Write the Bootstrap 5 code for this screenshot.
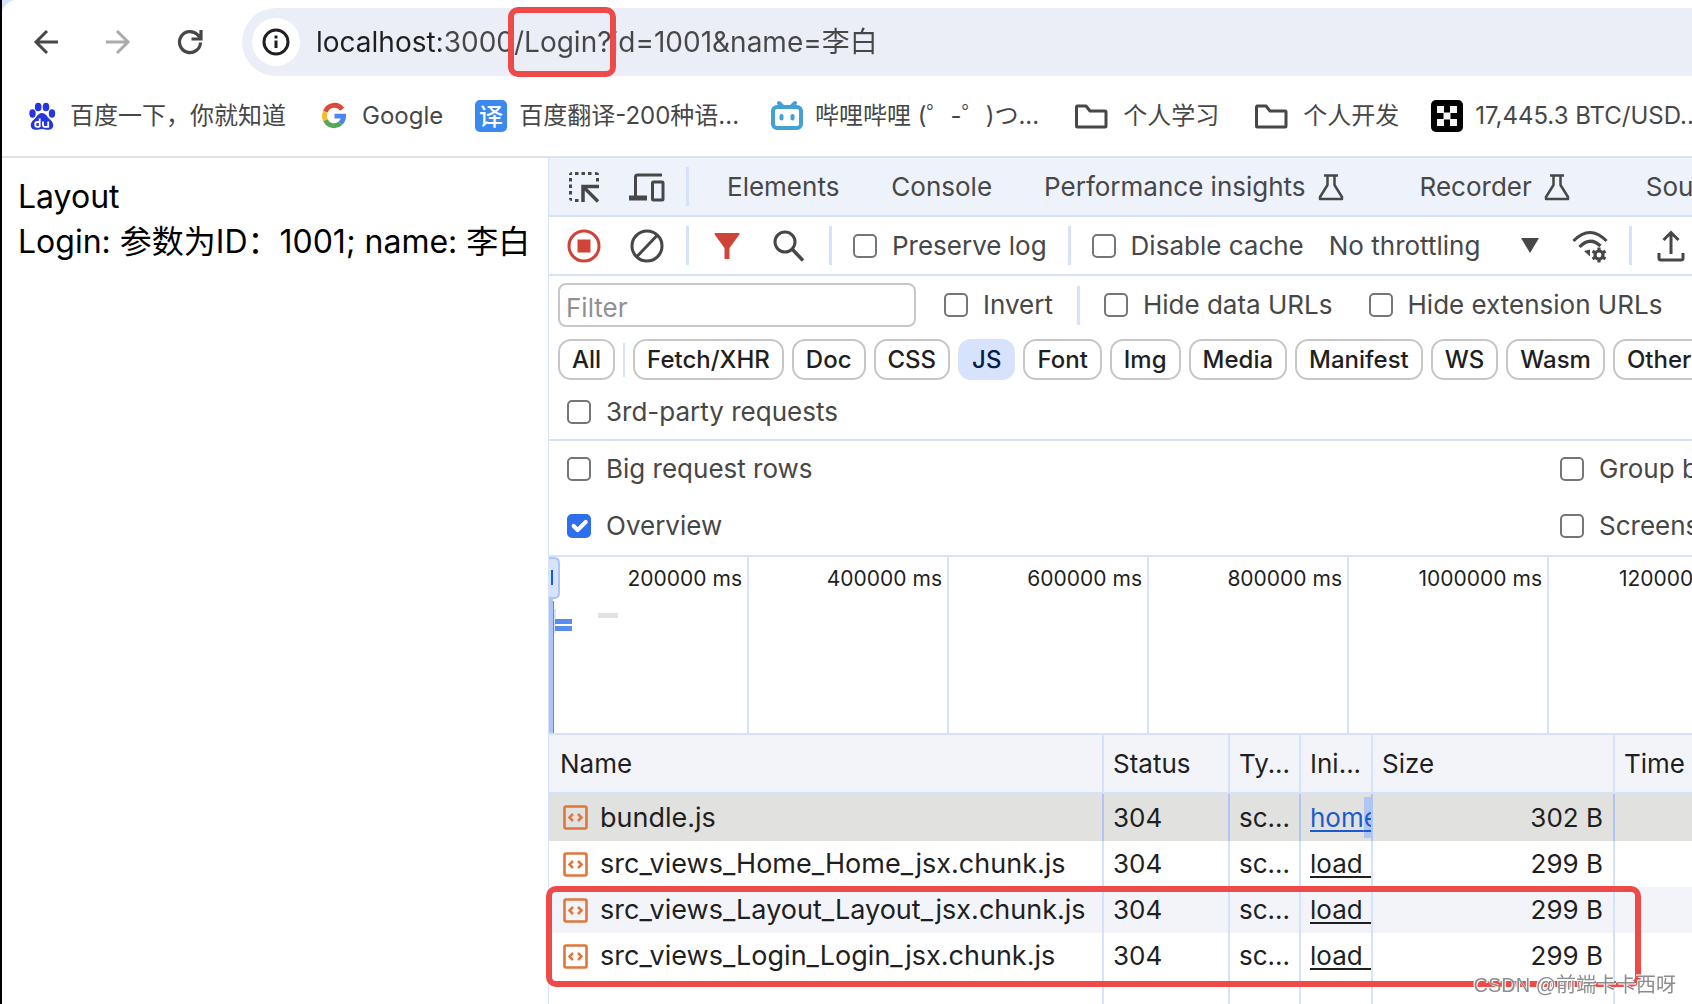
<!DOCTYPE html>
<html lang="zh-CN">
<head>
<meta charset="utf-8">
<meta name="viewport" content="width=device-width, initial-scale=1">
<title>localhost:3000/Login</title>
<link href="https://cdn.jsdelivr.net/npm/bootstrap@5.3.0/dist/css/bootstrap.min.css" rel="stylesheet">
<style>
:root{--line:#d6e2fb;--ink:#1f1f1f;--soft:#474747;--mark:#ed4a4a}
body{font-family:Inter,"Noto Sans CJK SC",sans-serif;font-size:26px;line-height:32px;color:var(--soft);background:#fff;border-left:2px solid #000;overflow:hidden}
svg{display:block;flex:none}
.plain-btn{border:0;background:none;padding:0;color:inherit;display:block;flex:none}
/* browser chrome */
.chrome-top{border-bottom:2px solid #e1e3e1;background:radial-gradient(circle at 16px 16px,#fff 16px,#d3e3fd 17px) 0 0/16px 16px no-repeat;height:158px}
.nav-row{padding:8px 0 0 28px}
.nav-btns{gap:40px;margin-right:36px}
.omnibox{height:68px;border-radius:34px 0 0 34px;background:#ebeef7;padding-left:10px}
.site-info{width:48px;height:48px;border-radius:50%;background:#fff;color:var(--ink)}
.address{border:0;outline:0;padding:0 0 4px;margin-left:16px;font-size:28px;height:48px;color:transparent;background:linear-gradient(to right,var(--ink) 124px,var(--soft) 124px);-webkit-background-clip:text;background-clip:text}
.frame-mark{position:absolute;border:6px solid var(--mark);border-radius:10px;pointer-events:none}
.url-mark{left:266px;top:-1px;width:108px;height:70px}
.bookmarks{gap:32px;padding:20px 0 0 24px;font-size:24px;white-space:nowrap}
.bookmarks a{color:var(--soft);text-decoration:none;display:flex;align-items:center;gap:12px;flex:none;height:40px}
.bm-icon{width:32px;height:32px}
.bm-folder{width:40px;height:32px}
/* page */
.page-pane{flex:0 0 546px;padding:16px;font-size:32px;line-height:45px;color:#000;white-space:nowrap}
/* devtools */
.devtools{border-left:1px solid var(--line);min-width:0}
.bar{height:59px;border-bottom:2px solid var(--line);white-space:nowrap;padding-left:18px}
.bar .sep{margin:0 21px}
.tabs-bar{background:#edf2fb}
.tabs-bar .sep{margin-right:12px}
.tool-gap{gap:28px}
.sep{width:3px;height:39px;background:var(--line);flex:none}
.tabs-bar .nav-link{color:var(--soft);padding:0 26px;display:flex;gap:12px;align-items:center;border:0}
.tabs-bar .nav-link.experiment{padding-right:50px}
.form-check-input.tick{width:24px;height:24px;margin:0;border:2px solid #767676;border-radius:5px;flex:none;float:none}
.form-check-input.tick:checked{background-color:#2f6fed;border-color:#2f6fed;background-size:27px}
.tick-label{display:flex;align-items:center;gap:15px;white-space:nowrap;flex:none}
.throttle{position:relative;width:210px;margin:0 33px 0 25px}
.throttle select{appearance:none;border:0;background:none;color:inherit;width:100%;padding:0}
.throttle svg{position:absolute;right:0;top:8px;pointer-events:none}
.filters{padding:7px 0 11px 9px;border-bottom:2px solid var(--line)}
.filter-box{width:358px;height:44px;border:2px solid #c7c7c7;border-radius:8px;padding:4px 6px 0;color:var(--ink);flex:none}
.filter-box::placeholder{color:#919191}
.ext-tick{margin-left:36px}
.chips{gap:8px;padding-top:12px}
.chip{border:2px solid #c7c7c7;border-radius:13px;height:41px;padding:0 12px;font-size:24px;line-height:37px;font-weight:500;color:var(--ink);background:#fff;flex:none}
.chip.on{background:#d7e3fc;border-color:#d7e3fc;color:#041e49}
.chips .sep{width:2px;height:34px}
.third{padding:16px 0 0 9px}
.settings{height:116px;border-bottom:2px solid var(--line);padding:12px 0 0 18px}
.settings .tick-label{height:32px}
.settings-col{display:flex;flex-direction:column;gap:25px}
.settings-col.first{flex:0 0 993px}
/* overview */
.overview{position:relative;height:178px;border-bottom:2px solid var(--line);color:var(--ink);font-size:21px;line-height:26px}
.tickcol{flex:0 0 200px;border-right:2px solid var(--line);text-align:right;padding:9px 5px 0 0;white-space:nowrap}
.overview svg{position:absolute;left:0;top:0}
/* requests */
.requests{table-layout:fixed;width:100%;height:100%;border-collapse:separate;border-spacing:0;color:var(--ink)}
.requests th,.requests td{border-right:2px solid var(--line);padding:0 10px 0 9px;white-space:nowrap;overflow:hidden;height:46px;vertical-align:middle}
.requests th:first-child{padding-left:11px}
.requests th:last-child,.requests td:last-child{border-right:0}
.requests th{font-weight:400;height:59px;background:#f2f4fa;border-bottom:2px solid var(--line)}
.requests .picked td{height:47px;background:#e1e1df;border-right-color:#aec6f6}
.requests .stripe td{background:#f2f4fa}
.requests .rest td{height:auto}
.requests td.init{padding-right:0}
.init a{color:inherit;text-decoration:underline 2px;text-underline-offset:3px;text-decoration-skip-ink:none}
.picked .init a{color:#1a5bd2}
.hit{background:#aec6f6;padding:5px 0}
.file{display:flex;align-items:center;gap:12px;padding-left:5px;font-size:27px}
.rows-mark{left:-3px;top:151px;right:51px;height:101px;z-index:2}
.watermark{position:fixed;right:16px;bottom:6px;font-family:"Liberation Sans","Noto Sans CJK SC",sans-serif;font-size:20px;line-height:26px;color:#8d8d8d;text-shadow:1px 1px 0 #fff,-1px -1px 0 #fff;z-index:3}
</style>
</head>
<body class="vh-100 d-flex flex-column">
<svg width="0" height="0" class="position-absolute" aria-hidden="true">
  <symbol id="flask" viewBox="0 0 26 28"><path d="M6 2.500h14M9.500 3v9L2 24v2h22v-2L16.500 12V3" fill="none" stroke="currentColor" stroke-width="2.500" stroke-linejoin="round"/></symbol>
  <symbol id="folder" viewBox="0 0 40 32"><path d="M6 6h9l4 5h15a1 1 0 0 1 1 1v14a1 1 0 0 1-1 1H6.500a1 1 0 0 1-1-1V7z" fill="none" stroke="#474747" stroke-width="3" stroke-linejoin="round"/></symbol>
  <symbol id="script" viewBox="0 0 25 25"><rect x="1.500" y="1.500" width="22" height="22" rx="1.500" fill="none" stroke="#e0763c" stroke-width="2.600"/><path d="M10 9l-3.500 3.500L10 16M15 9l3.500 3.500L15 16" fill="none" stroke="#e0763c" stroke-width="2.500"/></symbol>
</svg>

<header class="chrome-top flex-shrink-0">
  <div class="nav-row d-flex align-items-center">
    <div class="nav-btns d-flex">
      <button class="plain-btn" aria-label="Back"><svg width="32" height="32" viewBox="0 0 32 32" fill="none" stroke="#474747" stroke-width="3"><path d="M28 16H6M17 5L6 16l11 11"/></svg></button>
      <button class="plain-btn" aria-label="Forward"><svg width="32" height="32" viewBox="0 0 32 32" fill="none" stroke="#ababab" stroke-width="3"><path d="M4 16h22M15 5l11 11-11 11"/></svg></button>
      <button class="plain-btn" aria-label="Reload"><svg width="32" height="32" viewBox="0 0 32 32" fill="none" stroke="#474747" stroke-width="3.200"><path d="M26.500 16.500A10.500 10.500 0 1 1 23.500 8.700L26 11.500M27 4v9h-9.500"/></svg></button>
    </div>
    <div class="omnibox d-flex align-items-center flex-fill position-relative">
      <button class="plain-btn site-info d-flex align-items-center justify-content-center" aria-label="Site information"><svg width="28" height="28" viewBox="0 0 28 28"><circle cx="14" cy="14" r="12" fill="none" stroke="currentColor" stroke-width="3"/><path d="M12.500 12.500h3V20h-3zM12.500 7.500h3v3h-3z" fill="currentColor"/></svg></button>
      <input class="address flex-fill" type="text" aria-label="Address" value="localhost:3000/Login?id=1001&amp;name=李白">
      <div class="frame-mark url-mark"></div>
    </div>
  </div>
  <nav class="bookmarks d-flex overflow-hidden">
    <a href="#"><svg class="bm-icon" viewBox="0 0 32 32"><g fill="#2536dd"><ellipse cx="6.500" cy="13.500" rx="3.200" ry="4.200"/><ellipse cx="12.200" cy="7" rx="3.300" ry="4.300"/><ellipse cx="20" cy="7" rx="3.300" ry="4.300"/><ellipse cx="26" cy="13.500" rx="3.200" ry="4.200"/><path d="M16 13c4 0 5 4 8 6.500 5 4 4 10-1.500 10.300-2.500.1-4-.8-6.500-.8s-4 .9-6.500.8C4 29.500 3 23.500 8 19.500 11 17 12 13 16 13z"/></g><path d="M13.700 18.500v8.500M13.500 22h-2.300q-2 0-2 2.400t2 2.400h2.500M17 21.500v3.700q0 1.600 1.500 1.600h3.700v-5.300" stroke="#fff" stroke-width="1.800" fill="none"/></svg>百度一下，你就知道</a>
    <a href="#"><svg class="bm-icon" viewBox="0 0 32 32" fill="none" stroke-width="4.800"><path d="M24.200 9.200A9.600 9.600 0 0 0 7.400 11.800" stroke="#dc4a3c"/><path d="M7.400 11.800a9.600 9.600 0 0 0 0 8.400" stroke="#f6bb2f"/><path d="M7.400 20.200a9.600 9.600 0 0 0 14.900 3.200" stroke="#55a655"/><path d="M22.300 23.400A9.600 9.600 0 0 0 25.600 16.200H16.500" stroke="#4f86ee"/></svg>Google</a>
    <a href="#"><svg class="bm-icon" viewBox="0 0 32 32"><rect width="32" height="32" rx="5" fill="#3b88ef"/><text x="16" y="24.500" font-size="24" text-anchor="middle" fill="#fff" font-weight="500">译</text></svg>百度翻译-200种语...</a>
    <a href="#"><svg class="bm-icon" viewBox="0 0 32 32"><path d="M8 3l4 4M24 3l-4 4" stroke="#43a1d6" stroke-width="4" stroke-linecap="round"/><rect x="2" y="7" width="28" height="21" rx="4" fill="none" stroke="#43a1d6" stroke-width="4"/><path d="M10.500 16v2.500M21.500 16v2.500" stroke="#43a1d6" stroke-width="4" stroke-linecap="round"/></svg>哔哩哔哩 (゜-゜)つ...</a>
    <a href="#"><svg class="bm-folder"><use href="#folder"/></svg>个人学习</a>
    <a href="#"><svg class="bm-folder"><use href="#folder"/></svg>个人开发</a>
    <a href="#"><svg class="bm-icon" viewBox="0 0 32 32"><rect width="32" height="32" rx="5" fill="#000"/><path d="M6 6h7v7H6zM19 6h7v7h-7zM12.500 12.500h7v7h-7zM6 19h7v7H6zM19 19h7v7h-7z" fill="#f4f4f4"/></svg>17,445.3 BTC/USD...</a>
  </nav>
</header>

<div class="d-flex flex-fill overflow-hidden">
  <main class="page-pane">
    <div>Layout</div>
    <div>Login: 参数为ID：1001; name: 李白</div>
  </main>

  <section class="devtools d-flex flex-column flex-fill">
    <div class="bar tabs-bar d-flex align-items-center flex-shrink-0 overflow-hidden">
      <div class="tool-gap d-flex">
        <button class="plain-btn" aria-label="Inspect"><svg width="34" height="34" viewBox="0 0 34 34" fill="#474747"><path d="M2 4a3 3 0 0 1 3-2v3H2zM8 2h3.500v3H8zM14.500 2H18v3h-3.500zM21 2h3.500v3H21zM28 2c3 0 4 1 4 3h-4zM29 8h3v3.500h-3zM2 8h3v3.500H2zM2 14.500h3V18H2zM2 21h3v3.500H2zM2 28h3v3c-2 0-3-1-3-3zM8 29h3.500v3H8z"/><path d="M16 32V16.500h16M17.500 18L31 31.500" fill="none" stroke="#474747" stroke-width="3.500"/></svg></button>
        <button class="plain-btn" aria-label="Device toolbar"><svg width="36" height="34" viewBox="0 0 36 34" fill="none" stroke="#474747" stroke-width="3"><path d="M33 5H8.500Q6.500 5 6.500 7v20"/><path d="M0 28h18" stroke-width="5"/><rect x="23.500" y="12" width="10.500" height="18" rx="1"/></svg></button>
      </div>
      <div class="sep"></div>
      <nav class="nav flex-nowrap">
        <a class="nav-link" href="#">Elements</a>
        <a class="nav-link" href="#">Console</a>
        <a class="nav-link experiment" href="#">Performance insights <svg width="26" height="28"><use href="#flask"/></svg></a>
        <a class="nav-link experiment" href="#">Recorder <svg width="26" height="28"><use href="#flask"/></svg></a>
        <a class="nav-link" href="#">Sources</a>
      </nav>
    </div>

    <div class="bar d-flex align-items-center flex-shrink-0 overflow-hidden">
      <div class="tool-gap d-flex">
        <button class="plain-btn" aria-label="Stop recording"><svg width="34" height="34" viewBox="0 0 34 34"><circle cx="17" cy="17" r="15" fill="none" stroke="#d04437" stroke-width="3"/><path d="M10.500 10.500h13v13h-13z" fill="#d04437"/></svg></button>
        <button class="plain-btn" aria-label="Clear"><svg width="36" height="34" viewBox="0 0 36 34" fill="none" stroke="#474747" stroke-width="3"><circle cx="18" cy="17" r="15"/><path d="M28 6.500L8 27.500"/></svg></button>
      </div>
      <div class="sep"></div>
      <div class="tool-gap d-flex align-items-center">
        <button class="plain-btn" aria-label="Filter"><svg width="34" height="30" viewBox="-4 0 34 30" fill="#d04437"><path d="M1 2h24q1 1 0 2L15.500 17v11h-5V17L1 4q-1-1 0-2z"/></svg></button>
        <button class="plain-btn" aria-label="Search"><svg width="36" height="34" viewBox="0 0 36 34" fill="none" stroke="#474747" stroke-width="3"><circle cx="13" cy="13" r="10"/><path d="M20 20l11 11.500" stroke-width="3.500"/></svg></button>
      </div>
      <div class="sep"></div>
      <label class="tick-label"><input class="form-check-input tick" type="checkbox">Preserve log</label>
      <div class="sep"></div>
      <label class="tick-label"><input class="form-check-input tick" type="checkbox">Disable cache</label>
      <div class="throttle flex-shrink-0"><select aria-label="Throttling"><option>No throttling</option></select><svg width="18" height="15" viewBox="0 0 18 15"><path d="M0 0h18L9 15z" fill="#474747"/></svg></div>
      <button class="plain-btn" aria-label="Network conditions"><svg width="36" height="34" viewBox="0 0 36 34" fill="none" stroke="#474747" stroke-width="3.200"><path d="M1.500 12Q18-5 34.500 12M7.500 18Q18 7 28.500 17"/><path d="M12 22l6-1.500v7z" fill="#474747" stroke="none"/><circle cx="27" cy="26" r="4"/><path d="M27 18.500v3M27 30.500v3M20.500 22.200l2.600 1.500M30.900 28.300l2.600 1.500M20.500 29.800l2.600-1.500M30.900 23.700l2.600-1.500"/></svg></button>
      <div class="sep"></div>
      <button class="plain-btn ms-1" aria-label="Export"><svg width="28" height="34" viewBox="0 0 28 34" fill="none" stroke="#474747" stroke-width="3"><path d="M14 25V4M6.500 11L14 3.500 21.500 11M2 24v5q0 2 2 2h20q2 0 2-2v-5"/></svg></button>
    </div>

    <div class="filters flex-shrink-0 overflow-hidden">
      <div class="d-flex align-items-center">
        <input class="filter-box" type="text" placeholder="Filter" aria-label="Filter">
        <label class="tick-label ms-4 ps-1"><input class="form-check-input tick" type="checkbox">Invert</label>
        <div class="sep mx-4"></div>
        <label class="tick-label"><input class="form-check-input tick" type="checkbox">Hide data URLs</label>
        <label class="tick-label ext-tick"><input class="form-check-input tick" type="checkbox">Hide extension URLs</label>
      </div>
      <div class="chips d-flex align-items-center">
        <button class="chip">All</button><div class="sep"></div><button class="chip">Fetch/XHR</button><button class="chip">Doc</button><button class="chip">CSS</button><button class="chip on">JS</button><button class="chip">Font</button><button class="chip">Img</button><button class="chip">Media</button><button class="chip">Manifest</button><button class="chip">WS</button><button class="chip">Wasm</button><button class="chip">Other</button>
      </div>
      <div class="third d-flex"><label class="tick-label"><input class="form-check-input tick" type="checkbox">3rd-party requests</label></div>
    </div>

    <div class="settings d-flex flex-shrink-0 overflow-hidden">
      <div class="settings-col first">
        <label class="tick-label"><input class="form-check-input tick" type="checkbox">Big request rows</label>
        <label class="tick-label"><input class="form-check-input tick" type="checkbox" checked>Overview</label>
      </div>
      <div class="settings-col">
        <label class="tick-label"><input class="form-check-input tick" type="checkbox">Group by frame</label>
        <label class="tick-label"><input class="form-check-input tick" type="checkbox">Screenshots</label>
      </div>
    </div>

    <div class="overview d-flex flex-shrink-0 overflow-hidden">
      <div class="tickcol">200000 ms</div><div class="tickcol">400000 ms</div><div class="tickcol">600000 ms</div><div class="tickcol">800000 ms</div><div class="tickcol">1000000 ms</div><div class="tickcol">1200000 ms</div>
      <svg width="80" height="176" viewBox="0 0 80 176"><path d="M0 42h4v134H0z" fill="#aec6f6"/><path d="M4 44h1v132H4z" fill="#c4687a"/><path d="M5 52h2v24H5z" fill="#d6e2fb"/><path d="M0 1h5q5 0 5 5v30q0 5-5 5H0" fill="#d7e3fc" stroke="#aec6f6" stroke-width="2"/><path d="M2 13h2v15H2z" fill="#1a5bd2"/><path d="M6 62h17v5H6zM6 69h17v5H6z" fill="#5b8def"/><path d="M49 56h20v5H49z" fill="#e1e3e1"/></svg>
    </div>

    <div class="position-relative flex-fill">
      <table class="requests">
        <colgroup><col style="width:555px"><col style="width:126px"><col style="width:71px"><col style="width:72px"><col style="width:242px"><col></colgroup>
        <thead><tr><th>Name</th><th>Status</th><th>Ty...</th><th>Ini...</th><th>Size</th><th>Time</th></tr></thead>
        <tbody>
          <tr class="picked"><td><div class="file"><svg width="25" height="25"><use href="#script"/></svg>bundle.js</div></td><td>304</td><td>sc...</td><td class="init"><a href="#">hom<span class="hit">e</span></a></td><td class="text-end">302 B</td><td></td></tr>
          <tr><td><div class="file"><svg width="25" height="25"><use href="#script"/></svg>src_views_Home_Home_jsx.chunk.js</div></td><td>304</td><td>sc...</td><td class="init"><a href="#">load&nbsp;&nbsp;&nbsp;</a></td><td class="text-end">299 B</td><td></td></tr>
          <tr class="stripe"><td><div class="file"><svg width="25" height="25"><use href="#script"/></svg>src_views_Layout_Layout_jsx.chunk.js</div></td><td>304</td><td>sc...</td><td class="init"><a href="#">load&nbsp;&nbsp;&nbsp;</a></td><td class="text-end">299 B</td><td></td></tr>
          <tr><td><div class="file"><svg width="25" height="25"><use href="#script"/></svg>src_views_Login_Login_jsx.chunk.js</div></td><td>304</td><td>sc...</td><td class="init"><a href="#">load&nbsp;&nbsp;&nbsp;</a></td><td class="text-end">299 B</td><td></td></tr>
          <tr class="rest"><td></td><td></td><td></td><td></td><td></td><td></td></tr>
        </tbody>
      </table>
      <div class="frame-mark rows-mark"></div>
    </div>
  </section>
</div>
<div class="watermark">CSDN @前端卡卡西呀</div>
<script src="https://cdn.jsdelivr.net/npm/bootstrap@5.3.0/dist/js/bootstrap.bundle.min.js"></script>
</body>
</html>
